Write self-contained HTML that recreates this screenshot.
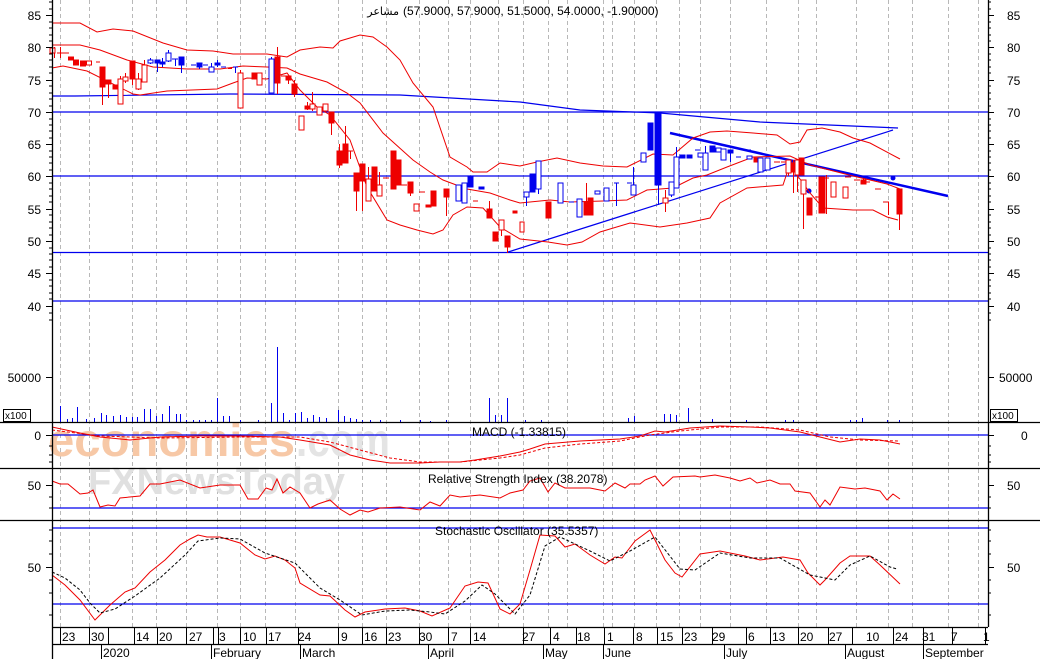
<!DOCTYPE html>
<html><head><meta charset="utf-8"><style>
html,body{margin:0;padding:0;background:#fff;}
svg{display:block;font-family:"Liberation Sans","DejaVu Sans",sans-serif;}
</style></head><body>
<svg width="1040" height="659" viewBox="0 0 1040 659" xmlns="http://www.w3.org/2000/svg">
<rect width="1040" height="659" fill="#fff"/>
<g stroke="#b8b8b8" stroke-dasharray="4,3" stroke-width="1">
<path d="M60.5 0V627M89.5 0V627M132.5 0V627M156.5 0V627M186.5 0V627M217.5 0V627M240.5 0V627M265.5 0V627M295.5 0V627M338.5 0V627M362.5 0V627M386.5 0V627M419.5 0V627M448.5 0V627M470.5 0V627M498.5 0V627M523.5 0V627M548.5 0V627M567.5 0V627M603.5 0V627M612.5 0V627M634.5 0V627M656.5 0V627M679.5 0V627M700.5 0V627M730.5 0V627M766.5 0V627M798.5 0V627M816.5 0V627M856.5 0V627M888.5 0V627M912.5 0V627M948.5 0V627M978.5 0V627"/>
</g>
<text x="48" y="456" font-size="46" fill="#f7c8a6" font-weight="bold" textLength="247" lengthAdjust="spacingAndGlyphs">economies</text>
<text x="296" y="456" font-size="46" fill="#e4e4e4" font-weight="bold" textLength="94" lengthAdjust="spacingAndGlyphs">.com</text>
<text x="88" y="494" font-size="38" fill="#e0e0e0" font-weight="bold" textLength="257" lengthAdjust="spacingAndGlyphs">FXNewsToday</text>
<g stroke="#0000ee" stroke-width="1.2" fill="none">
<path d="M52 112H988M52 176H988M52 252.5H988M52 301H988"/>
<polyline points="52,96 75,96 230,94 400,95 520,102 580,110 660,113 760,122 898,128"/>
<polyline points="508,252 893,130"/>
<polyline points="670,133 948,196" stroke-width="2.5"/>
<path d="M52 435H988M52 508H988M52 528H988M52 604H988"/>
</g>
<circle cx="809" cy="191" r="2.5" fill="#0000ee"/><circle cx="893" cy="178" r="2.5" fill="#0000ee"/>
<g stroke="#ee0000" stroke-width="1" fill="none">
<polyline points="52,23 80,23 97,32 113,29 133,31 163,43 187,50 213,51 233,54 267,54 287,57 300,50 320,47 333,48 340,41 360,35 373,37 387,47 400,60 413,83 433,107 450,157 467,167 473,172 487,172 500,163 520,166 537,162 557,158 580,163 603,166 627,167 635,163 653,154 673,155 693,138 710,132 727,131 753,133 777,135 790,144 800,142 807,130 822,128 840,132 853,138 870,143 900,159"/>
<polyline points="52,45 80,45 100,50 127,60 153,67 187,69 220,69 243,66 267,67 287,68 300,74 327,82 347,93 360,103 383,133 413,160 430,172 443,180 467,189 490,193 510,200 520,203 550,200 570,202 603,201 627,200 647,190 673,188 693,178 707,175 727,167 753,157 790,156 810,165 853,176 887,184 900,189"/>
<polyline points="52,68 63,66 87,71 133,94 140,95 167,91 217,89 233,83 247,78 267,79 287,73 300,90 317,107 330,115 350,140 367,187 387,220 400,225 417,230 433,234 443,230 453,215 467,207 483,208 500,227 520,239 548,242 567,245 582,242 600,232 630,223 660,227 687,223 710,218 720,203 747,188 783,185 787,173 793,170 803,183 810,193 823,208 853,210 873,210 887,217 898,220"/>
</g>
<g stroke="#ee0000" stroke-width="1" fill="#ee0000">
<path fill="none" d="M54.5 47V58M60.5 47V58M57 53H64M63 53H69M96 62H100M102.5 67V105M108.5 80V98M120.5 76V104M125.5 73V83M132.5 61V85M138.5 73V90M144.5 60V82M228 68.5H232M240.5 70V108M277.5 47V94M281 76H286M288.5 76V84M294.5 80V97M307.5 102V110M312.5 92V111M331.5 112V135M339.5 144V168M345.5 126V163M347 151H353M350.5 151V159M356.5 173V211M362.5 164V211M368.5 167V201M379.5 172V196M383 178H389M401 185H407M410.5 182V196M419 192H425M446.5 189V216M473 201H478M489.5 201V218M501.5 220V236M507.5 236V253M586.5 183V215M665.5 190V212M774 162H780M781 162H787M788.5 160V176M793.5 160V193M797.5 160V192M803.5 180V229M815 197H821M826.5 175V214M823 178H829M845 177H851M854 180H860M863.5 178V184M864 182H870M875 189H881M883 202H889M888.5 202V215M899.5 189V230"/>
<rect x="50" y="48" width="5" height="5" fill="#fff"/>
<rect x="68.5" y="57" width="5" height="3"/><rect x="73.5" y="60" width="5" height="5"/><rect x="80.5" y="61" width="5" height="5"/>
<rect x="86.5" y="61" width="5" height="4" fill="#fff"/>
<rect x="100" y="67" width="5" height="20"/><rect x="106" y="80" width="5" height="4"/><rect x="113" y="85" width="5" height="4"/>
<rect x="118" y="79" width="5" height="25" fill="#fff"/><rect x="123" y="77" width="5" height="4" fill="#fff"/>
<rect x="130" y="61" width="5" height="18"/><rect x="136" y="79" width="5" height="10" fill="#fff"/><rect x="142" y="65" width="5" height="17" fill="#fff"/>
<rect x="238" y="73" width="5" height="35" fill="#fff"/><rect x="252" y="73" width="5" height="6"/><rect x="257" y="73" width="5" height="12" fill="#fff"/>
<rect x="275" y="57" width="5" height="26"/><rect x="286" y="76" width="5" height="4"/><rect x="292" y="84" width="5" height="10"/>
<rect x="299" y="116" width="5" height="14" fill="#fff"/><rect x="305" y="106" width="5" height="3"/><rect x="310" y="104" width="5" height="5" fill="#fff"/>
<rect x="317" y="107" width="5" height="8" fill="#fff"/><rect x="323" y="104" width="5" height="7" fill="#fff"/><rect x="329" y="112" width="5" height="11"/>
<rect x="337" y="151" width="5" height="14"/><rect x="343" y="144" width="5" height="19"/><rect x="354" y="173" width="5" height="18"/>
<rect x="360" y="164" width="5" height="17"/><rect x="366" y="179" width="5" height="22" fill="#fff"/><rect x="372" y="167" width="5" height="24"/>
<rect x="377" y="185" width="5" height="11" fill="#fff"/><rect x="391" y="151" width="5" height="38"/><rect x="396" y="160" width="5" height="25"/>
<rect x="408" y="182" width="5" height="11"/><rect x="414" y="204" width="5" height="7" fill="#fff"/><rect x="426" y="205" width="5" height="2"/>
<rect x="431" y="191" width="5" height="15"/><rect x="444" y="189" width="5" height="8"/><rect x="487" y="209" width="5" height="9"/>
<rect x="493" y="232" width="5" height="9"/><rect x="499" y="220" width="5" height="10" fill="#fff"/><rect x="505" y="236" width="5" height="11"/>
<rect x="513" y="211" width="4" height="2"/><rect x="520" y="222" width="4" height="10" fill="#fff"/>
<rect x="546" y="202" width="5" height="16"/><rect x="584" y="202" width="5" height="13"/><rect x="588" y="198" width="5" height="17"/>
<rect x="663" y="198" width="5" height="5" fill="#fff"/><rect x="754" y="158" width="5" height="4"/>
<rect x="786" y="160" width="5" height="13" fill="#fff"/><rect x="791" y="163" width="5" height="9"/><rect x="795" y="160" width="5" height="15" fill="#fff"/>
<rect x="799" y="158" width="5" height="17"/><rect x="801" y="180" width="5" height="14" fill="#fff"/><rect x="807" y="198" width="5" height="17"/>
<rect x="819" y="177" width="6" height="36"/><rect x="831" y="182" width="5" height="15" fill="#fff"/><rect x="843" y="187" width="5" height="11" fill="#fff"/>
<rect x="861" y="180" width="5" height="4"/><rect x="897" y="189" width="5" height="25"/>
</g>
<g stroke="#0000ee" stroke-width="1" fill="#0000ee">
<path fill="none" d="M150.5 58V64M157.5 60V72M162.5 58V67M168.5 50V62M172 59H178M175.5 59V66M181.5 57V73M191 65H196M199.5 63V69M203 65H208M211.5 63V72M217.5 60V67M221 67H226M233 67H238M235.5 67V73M271.5 57V93M526.5 192V206M538.5 161V194M569 202H574M614 183H619M616.5 183V206M627 183H632M633.5 167V195M658.5 112V205M671.5 182V197M676.5 147V188M695 150H700M705.5 146V170M730.5 150V162M736 157H741M746 150H751"/>
<rect x="148" y="60" width="5" height="3" fill="#fff"/><rect x="155" y="60" width="5" height="3"/><rect x="160" y="62" width="5" height="2"/>
<rect x="166" y="53" width="5" height="8" fill="#fff"/><rect x="179" y="57" width="5" height="8"/><rect x="197" y="63" width="5" height="4"/>
<rect x="209" y="67" width="5" height="5" fill="#fff"/><rect x="215" y="63" width="5" height="2"/><rect x="269" y="59" width="5" height="34" fill="#fff"/>
<rect x="456" y="185" width="5" height="16" fill="#fff"/><rect x="462" y="183" width="5" height="20" fill="#fff"/><rect x="468" y="177" width="5" height="10"/>
<rect x="479" y="187" width="5" height="2"/><rect x="524" y="192" width="5" height="5" fill="#fff"/><rect x="530" y="174" width="5" height="18"/>
<rect x="536" y="161" width="5" height="28" fill="#fff"/><rect x="558" y="183" width="5" height="20" fill="#fff"/><rect x="577" y="199" width="5" height="18" fill="#fff"/>
<rect x="595" y="191" width="5" height="3" fill="#fff"/><rect x="604" y="188" width="5" height="13" fill="#fff"/><rect x="631" y="185" width="5" height="10" fill="#fff"/>
<rect x="641" y="153" width="5" height="9" fill="#fff"/><rect x="648" y="123" width="5" height="27"/><rect x="655" y="112" width="6" height="73"/>
<rect x="669" y="182" width="5" height="13" fill="#fff"/><rect x="674" y="157" width="5" height="31" fill="#fff"/><rect x="680" y="155" width="5" height="3"/>
<rect x="687" y="155" width="5" height="3"/><rect x="698" y="153" width="5" height="4" fill="#fff"/><rect x="703" y="153" width="5" height="17" fill="#fff"/>
<rect x="710" y="146" width="5" height="6"/><rect x="716" y="148" width="5" height="4" fill="#fff"/><rect x="721" y="149" width="5" height="11" fill="#fff"/>
<rect x="728" y="150" width="5" height="3"/><rect x="747" y="156" width="5" height="3" fill="#fff"/><rect x="758" y="158" width="5" height="14" fill="#fff"/>
<rect x="765" y="158" width="5" height="12" fill="#fff"/>
</g>
<g stroke="#0000ee" stroke-width="1">
<path d="M60.5 406V422M67.5 419V422M72.5 418V422M77.5 407V422M86.5 419V422M94.5 418V422M101.5 413V422M106.5 415V422M113.5 416V422M120.5 415V422M126.5 417V422M132.5 417V422M137.5 417V422M144.5 409V422M150.5 409V422M156.5 416V422M162.5 414V422M169.5 406V422M176.5 414V422M180.5 414V422M186.5 420V422M193.5 420V422M199.5 420V422M205.5 420V422M211.5 420V422M217.5 398V422M223.5 416V422M229.5 416V422M240.5 420V422M258.5 420V422M271.5 403V422M277.5 347V422M283.5 413V422M289.5 420V422M295.5 413V422M301.5 412V422M307.5 418V422M313.5 415V422M319.5 417V422M326.5 418V422M338.5 410V422M344.5 416V422M350.5 418V422M356.5 419V422M362.5 420V422M370.5 420V422M380.5 420V422M400.5 420V422M420.5 420V422M430.5 421V422M446.5 420V422M489.5 398V422M495.5 415V422M501.5 415V422M507.5 398V422M525.5 420V422M541.5 420V422M628.5 418V422M634.5 416V422M664.5 414V422M670.5 414V422M676.5 415V422M688.5 408V422M700.5 420V422M712.5 419V422M730.5 420V422M746.5 420V422M785.5 420V422M793.5 420V422M850.5 420V422M856.5 420V422M862.5 418V422M887.5 420V422M899.5 420V422"/>
</g>
<g fill="none" stroke="#ee0000" stroke-width="1">
<polyline points="52,427 80,433 100,437 130,440 160,437 200,436 240,436 280,437 300,440 330,445 350,455 370,460 390,463 420,463 440,462 460,462 475,460 500,456 520,452 530,449 545,444 580,441 600,440 620,439 640,436 655,431 665,432 690,428 720,426 750,427 770,428 800,432 820,437 840,442 860,439 880,440 900,444"/>
<polyline stroke-dasharray="3,2" points="52,430 100,436 160,438 240,437 300,437 330,442 360,450 390,458 420,462 460,462 500,458 520,455 545,448 580,444 620,441 650,435 680,431 720,427 760,427 800,430 830,437 860,440 900,441"/>
<polyline points="52,481 60,484 68,484 80,494 88,493 93,490 100,507 108,505 115,506 120,498 140,496 150,484 160,484 180,480 200,488 220,485 240,485 248,499 258,499 266,488 272,490 277,479 283,493 290,487 300,493 310,508 318,504 330,500 340,509 350,515 360,510 368,512 380,508 400,507 420,510 430,502 440,506 450,495 460,497 480,495 500,498 510,493 523,490 530,481 540,478 548,492 555,483 565,488 590,488 600,490 605,491 615,483 625,488 630,484 640,484 645,480 655,476 663,486 673,477 695,476 700,477 715,475 730,478 740,481 750,478 757,483 770,480 780,484 790,484 795,491 810,493 820,507 825,500 830,505 840,487 855,489 865,488 880,491 887,500 893,494 900,499"/>
<polyline points="52,575 65,585 80,600 95,620 110,605 125,592 135,588 150,572 165,560 170,555 180,545 190,539 198,535 207,537 220,537 240,543 255,555 265,559 275,556 285,560 295,568 300,583 320,595 330,596 345,610 355,617 365,612 385,609 405,608 420,611 432,616 450,608 465,586 478,582 488,583 500,609 510,614 520,604 530,570 540,535 555,536 565,547 575,544 590,555 605,564 615,557 622,558 635,541 650,530 665,560 675,573 682,577 700,554 720,551 745,556 760,560 783,557 800,560 808,573 820,585 825,580 840,563 850,556 870,556 880,565 900,584"/>
</g>
<polyline fill="none" stroke="#000" stroke-width="1" stroke-dasharray="3,2" points="52,572 65,578 80,590 90,603 100,613 115,609 135,596 160,578 185,555 198,541 220,538 240,539 265,553 295,563 320,588 340,600 362,615 385,611 410,610 430,612 445,614 465,601 482,585 495,594 505,604 515,614 530,595 545,546 560,537 590,551 610,561 630,551 655,537 680,569 695,570 720,553 750,558 780,558 810,575 835,580 850,565 870,556 890,567 897,569"/>
<g stroke="#000" stroke-width="1.3" fill="none">
<path d="M0 422.5H1040M0 468.5H1040M0 520.5H1040M52 627.5H988M52 644.5H988M52.5 0V659M988.5 0V627"/>
</g>
<g stroke="#000" stroke-width="1">
<path d="M46 15.5H52M46 47.5H52M46 80.5H52M46 112.5H52M46 144.5H52M46 176.5H52M46 209.5H52M46 241.5H52M46 273.5H52M46 306.5H52M988 15.5H994M988 47.5H994M988 80.5H994M988 112.5H994M988 144.5H994M988 176.5H994M988 209.5H994M988 241.5H994M988 273.5H994M988 306.5H994"/>
<path d="M49 2H52M49 9H52M49 22H52M49 28H52M49 35H52M49 41H52M49 54H52M49 60H52M49 67H52M49 73H52M49 86H52M49 93H52M49 99H52M49 106H52M49 119H52M49 125H52M49 131H52M49 138H52M49 151H52M49 157H52M49 163H52M49 170H52M49 183H52M49 189H52M49 196H52M49 202H52M49 215H52M49 222H52M49 228H52M49 235H52M49 248H52M49 254H52M49 260H52M49 267H52M49 280H52M49 286H52M49 293H52M49 299H52M49 313H52M49 320H52" />
<path d="M988 2H991M988 9H991M988 22H991M988 28H991M988 35H991M988 41H991M988 54H991M988 60H991M988 67H991M988 73H991M988 86H991M988 93H991M988 99H991M988 106H991M988 119H991M988 125H991M988 131H991M988 138H991M988 151H991M988 157H991M988 163H991M988 170H991M988 183H991M988 189H991M988 196H991M988 202H991M988 215H991M988 222H991M988 228H991M988 235H991M988 248H991M988 254H991M988 260H991M988 267H991M988 280H991M988 286H991M988 293H991M988 299H991M988 313H991M988 320H991"/>
<path d="M46 377.5H52M988 377.5H994M46 435.5H52M988 435.5H994M46 485.5H52M988 485.5H994M46 567.5H52M988 567.5H994M49 446H52M49 455H52M49 462H52M49 497H52M49 508H52M49 530H52M49 541H52M49 554H52M49 580H52M49 593H52M49 615H52M988 446H991M988 455H991M988 462H991M988 497H991M988 508H991M988 530H991M988 541H991M988 554H991M988 580H991M988 593H991M988 615H991"/>
<path d="M60.5 627V644M89.5 627V644M108.5 627V644M134.5 627V644M157.5 627V644M186.5 627V644M213.5 627V644M218.5 627V644M240.5 627V644M266.5 627V644M298.5 627V644M338.5 627V644M362.5 627V644M386.5 627V644M419.5 627V644M448.5 627V644M470.5 627V644M523.5 627V644M550.5 627V644M576.5 627V644M604.5 627V644M633.5 627V644M657.5 627V644M682.5 627V644M712.5 627V644M746.5 627V644M770.5 627V644M798.5 627V644M828.5 627V644M852.5 627V644M893.5 627V644M923.5 627V644M952.5 627V644M985.5 627V644"/>
<path d="M101.5 644V659M211.5 644V659M300.5 644V659M428.5 644V659M543.5 644V659M603.5 644V659M724.5 644V659M845.5 644V659M923.5 644V659"/>
</g>
<g font-size="12" fill="#000">
<g text-anchor="end">
<text x="41" y="20">85</text><text x="41" y="52">80</text><text x="41" y="85">75</text><text x="41" y="117">70</text><text x="41" y="149">65</text><text x="41" y="181">60</text><text x="41" y="214">55</text><text x="41" y="246">50</text><text x="41" y="278">45</text><text x="41" y="311">40</text><text x="41" y="382">50000</text><text x="41" y="440">0</text><text x="41" y="490">50</text><text x="41" y="572">50</text>
</g>
<text x="1007" y="20">85</text><text x="1007" y="52">80</text><text x="1007" y="85">75</text><text x="1007" y="117">70</text><text x="1007" y="149">65</text><text x="1007" y="181">60</text><text x="1007" y="214">55</text><text x="1007" y="246">50</text><text x="1007" y="278">45</text><text x="1007" y="311">40</text><text x="999" y="382">50000</text><text x="1021" y="440">0</text><text x="1007" y="490">50</text><text x="1007" y="572">50</text>
</g>
<g font-size="10"><rect x="3.5" y="409.5" width="27" height="12" fill="#fff" stroke="#000"/><text x="5" y="419">x100</text>
<rect x="990.5" y="409.5" width="27" height="12" fill="#fff" stroke="#000"/><text x="992" y="419">x100</text></g>
<g font-size="12" fill="#000">
<text x="399" y="15" text-anchor="end" font-size="11">مشاعر</text>
<text x="403" y="15">(57.9000, 57.9000, 51.5000, 54.0000, -1.90000)</text>
<text x="472" y="436">MACD (-1.33815)</text>
<text x="428" y="483">Relative Strength Index (38.2078)</text>
<text x="435" y="535">Stochastic Oscillator (35.5357)</text>
</g>
<g font-size="12" fill="#000">
<text x="62" y="641">23</text><text x="91" y="641">30</text><text x="136" y="641">14</text><text x="159" y="641">20</text><text x="189" y="641">27</text><text x="219" y="641">3</text><text x="243" y="641">10</text><text x="268" y="641">17</text><text x="298" y="641">24</text><text x="341" y="641">9</text><text x="364" y="641">16</text><text x="388" y="641">23</text><text x="419" y="641">30</text><text x="451" y="641">7</text><text x="473" y="641">14</text><text x="522" y="641">27</text><text x="553" y="641">4</text><text x="577" y="641">18</text><text x="607" y="641">1</text><text x="636" y="641">8</text><text x="660" y="641">15</text><text x="684" y="641">23</text><text x="712" y="641">29</text><text x="748" y="641">6</text><text x="772" y="641">13</text><text x="800" y="641">20</text><text x="829" y="641">27</text><text x="866" y="641">10</text><text x="895" y="641">24</text><text x="922" y="641">31</text><text x="951" y="641">7</text><text x="983" y="641">1</text>
<text x="103" y="657">2020</text><text x="213" y="657">February</text><text x="302" y="657">March</text><text x="430" y="657">April</text><text x="545" y="657">May</text><text x="605" y="657">June</text><text x="726" y="657">July</text><text x="847" y="657">August</text><text x="925" y="657">September</text>
</g>
</svg>
</body></html>
